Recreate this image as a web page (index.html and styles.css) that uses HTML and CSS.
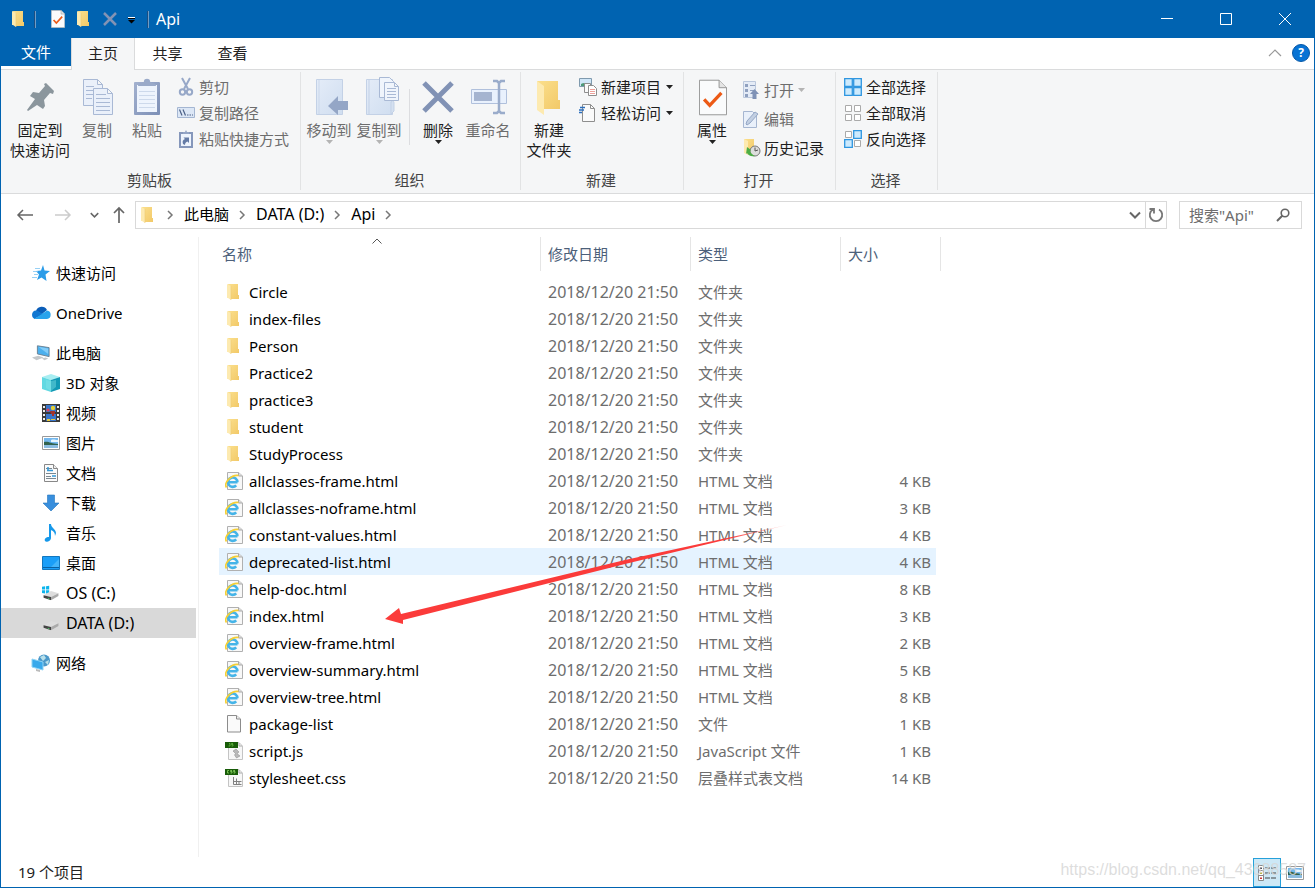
FILE: index.html
```html
<!DOCTYPE html>
<html lang="zh-CN">
<head>
<meta charset="utf-8">
<meta name="viewport" content="width=device-width, initial-scale=1">
<title>Api</title>
<link rel="stylesheet" href="styles.css">
</head>
<body>
<svg class="defs" aria-hidden="true">
  <defs>
    <linearGradient id="g-fold" x1="0" y1="0" x2="1" y2="1"><stop offset="0" stop-color="#fbdf8c"/><stop offset="1" stop-color="#f2c968"/></linearGradient>
    <linearGradient id="g-clip" x1="0" y1="0" x2="1" y2="1"><stop offset="0" stop-color="#a3b1cf"/><stop offset="1" stop-color="#7c8fb6"/></linearGradient>
    <linearGradient id="g-book" x1="0" y1="0" x2="1" y2="1"><stop offset="0" stop-color="#e4ecf8"/><stop offset="1" stop-color="#d0def0"/></linearGradient>
    <symbol id="folder" viewBox="0 0 18 18"><path d="M3 1h10v11h1v4H5z" fill="url(#g-fold)"/><path d="M2 1l4 2v14l-3-2H2z" fill="#fdeab0"/><path d="M6 3v14" stroke="#eccb74" stroke-width=".6"/></symbol>
    <symbol id="html" viewBox="0 0 18 18"><path d="M2.500.5h11L17.500 4v13.500h-15z" fill="#f8f8f8" stroke="#b0b0b0"/><path d="M13.500.5V4h4" fill="#ddd" stroke="#a8a8a8"/><path d="M12.500 10.300H4M12.400 10.300a4.700 4.700 0 1 0-1.200 3" fill="none" stroke="#45b4e8" stroke-width="2.600"/><path d="M1.500 15.500C-1.500 11 6 2.500 13.500 3.500" fill="none" stroke="#f5cf35" stroke-width="1.700"/></symbol>
    <symbol id="blank" viewBox="0 0 18 18"><path d="M2.500.5h9L15.500 4v13h-13z" fill="#fafafa" stroke="#8c8c8c"/><path d="M11.500.5V4h4" fill="#eee" stroke="#8c8c8c"/></symbol>
    <symbol id="js" viewBox="1 0 18 18"><path d="M4.500.5H15L18.500 4v13.500h-14z" fill="#f7f7f7" stroke="#c4c4c4"/><path d="M15 1v3h3" fill="none" stroke="#aaa"/><path d="M0 0h14v6H0z" fill="#185c08"/><path d="M5 1.500h1V4H4.500M9 1.500H7.500v1H9V4H7.500" fill="none" stroke="#65b843" stroke-width=".8"/><path d="M12 7l3 3-2 1.500 3 2.500-3.500 2-2-3 1-1.500L9 9z" fill="#b9b9b9" stroke="#888" stroke-width=".5"/></symbol>
    <symbol id="css" viewBox="1 0 18 18"><path d="M4.500.5H15L18.500 4v13.500h-14z" fill="#f7f7f7" stroke="#c4c4c4"/><path d="M15 1v3h3" fill="none" stroke="#aaa"/><path d="M0 0h14v6H0z" fill="#185c08"/><path d="M5 1.500H3.500V4H5M8 1.500H6.500v1H8V4H6.500M11 1.500H9.500v1H11V4H9.500" fill="none" stroke="#8bd462" stroke-width=".8"/><path d="M9.500 8v7.500h8M9.500 12.500h8M12.500 9.500v6M15 12v3" fill="none" stroke="#808080"/></symbol>
    <symbol id="check" viewBox="0 0 30 38"><path d="M.5.500h21l8 8v29h-29z" fill="#fafbfc" stroke="#919191"/><path d="M21.500.5v8h8" fill="#e4e4e4" stroke="#919191"/><path d="M5.500 21l6 6.500L24 14" fill="none" stroke="#ec5a16" stroke-width="3.500"/></symbol>
    <symbol id="caret" viewBox="0 0 7 4"><path d="M0 0h7L3.500 4z" fill="currentColor"/></symbol>
    <symbol id="next" viewBox="0 0 8 10"><path d="M2 1l4 4-4 4" fill="none" stroke="#777" stroke-width="1.500"/></symbol>
    <symbol id="down" viewBox="0 0 12 8"><path d="M1 1.500l5 5 5-5" fill="none" stroke="currentColor" stroke-width="2"/></symbol>
    <symbol id="photo" viewBox="0 0 18 14"><path d="M.5.500h17v13H.5z" fill="#fff" stroke="#999"/><path d="M2 2h14v10H2z" fill="#74b8ee"/><path d="M2 6c5-1 7 2 14 2v2H2z" fill="#31624d"/><path d="M2 9h14v3H2z" fill="#8cbce0"/><path d="M9 4c3-1 4 0 7 0v2H9z" fill="#e6f5ff"/></symbol>
    <symbol id="drive" viewBox="0 0 20 12"><path d="M1 6l9-5 9 2.500-9 4.500z" fill="#ddd"/><path d="M1 6l9 2v4L1 9z" fill="#444"/><path d="M10 8l9-4.500V7l-9 5z" fill="#aaa"/><path d="M6 9l2 .5v1L6 10z" fill="#4ce36c"/></symbol>
  </defs>
</svg>

<div class="window">
  <header class="titlebar">
    <div class="quick">
      <svg class="i18"><use href="#folder"/></svg>
      <span class="tsep"></span>
      <svg class="tcheck"><use href="#check"/></svg>
      <svg class="i18"><use href="#folder"/></svg>
      <svg class="tx" viewBox="0 0 14 14"><path d="M1 1l12 12M13 1L1 13" stroke="#8293b4" stroke-width="2.500"/></svg>
      <svg class="tdrop" viewBox="0 0 7 7"><path d="M0 .5h7" stroke="#fff"/><path d="M0 1.500h7" stroke="#000"/><path d="M0 3h7L3.500 6.500z"/></svg>
      <span class="tsep"></span>
      <h1>Api</h1>
    </div>
    <div class="winbtns">
      <button type="button" aria-label="最小化"><svg viewBox="0 0 12 12"><path d="M0 5.500h12"/></svg></button>
      <button type="button" aria-label="最大化"><svg viewBox="0 0 12 12"><path d="M.5.500h11v11H.5z"/></svg></button>
      <button type="button" aria-label="关闭"><svg viewBox="0 0 12 12"><path d="M0 0l12 12M12 0L0 12"/></svg></button>
    </div>
  </header>

  <nav class="tabs">
    <button type="button" class="tab file">文件</button>
    <button type="button" class="tab active">主页</button>
    <button type="button" class="tab">共享</button>
    <button type="button" class="tab">查看</button>
    <div class="help">
      <svg class="collapse" viewBox="0 0 14 8"><path d="M1 7l6-6 6 6" fill="none" stroke="#999" stroke-width="1.200"/></svg>
      <button type="button">?</button>
    </div>
  </nav>

  <section class="ribbon">
    <div class="group">
      <div class="tools clip">
        <button type="button" class="big pin">
          <svg width="40" height="44" viewBox="0 0 40 44"><path d="M7 34l8-11-5-3 3-4 6 1 6-7-1-2 2-1 8 8-1 3-3-1-6 7 1 6-2 3-6-4L8 35z" fill="#8b969d"/></svg>
          <span>固定到<br>快速访问</span></button>
        <button type="button" class="big off">
          <svg width="40" height="44" viewBox="0 0 40 44"><g fill="#eaf0fa" stroke="#a9b9d5"><path d="M6.500 3.500h14l5 5v21h-19zM20.500 3.500v5h5"/><path d="M9 10.500h8M9 14.500h8M9 18.500h8M9 22.500h6"/><path d="M16.500 12.500h14l5 5v21h-19zM30.500 12.500v5h5M19 18.500h10M19 22.500h14M19 26.500h14M19 30.500h14M19 34.500h14"/></g></svg>
          <span>复制</span></button>
        <button type="button" class="big off">
          <svg width="40" height="44" viewBox="0 0 40 44"><rect x="7" y="6" width="26" height="33" rx="1" fill="url(#g-clip)"/><path d="M10 9h20v27H10z" fill="#eef4fd"/><path d="M12 15.500h16M12 19.500h16M12 23.500h16M12 27.500h16M12 31.500h16" stroke="#cdd9eb"/><path d="M11 10c0-4 6-2 6-5 0-3 6-3 6 0s6 1 6 5z" fill="#9aaac9"/></svg>
          <span>粘贴</span></button>
        <div class="list">
          <button type="button" class="small off"><svg width="18" height="18" viewBox="0 0 18 18" fill="none" stroke="#97a8c8" stroke-width="2"><path d="M5 0l6 11M13 0L7 11"/><circle cx="5.500" cy="14" r="2.700"/><circle cx="12.500" cy="14" r="2.700"/></svg>剪切</button>
          <button type="button" class="small off"><svg width="18" height="18" viewBox="0 0 18 18"><path d="M.5 3.500h17v10H.5z" fill="#dce7f6" stroke="#a4b6d2"/><path d="M2.500 5.500l2.500 6M6 5.500l2.500 6M10 11h1.500M12.500 11H14M15 11h1" stroke="#4d6288" stroke-width="1.200"/></svg>复制路径</button>
          <button type="button" class="small off"><svg width="18" height="18" viewBox="0 0 18 18"><path d="M3 3h12v14H3z" fill="#eef4fd" stroke="#8597bb" stroke-width="2"/><path d="M6 4V2h2l1-2 1 2h2v2z" fill="#93a4c5"/><path d="M6 14c-1-3 0-4 2-5L6.500 7.500H12V13l-1.500-1.500C9 12 8 13 8 15z" fill="#647ba6"/></svg>粘贴快捷方式</button>
        </div>
      </div>
      <h2>剪贴板</h2>
    </div>

    <div class="group">
      <div class="tools org">
        <button type="button" class="big off">
          <svg width="40" height="44" viewBox="0 0 40 44"><path d="M7.500 3.500h26v35h-26z" fill="url(#g-book)" stroke="#c3d1e6"/><path d="M10 4v34" stroke="#cbd8eb"/><path d="M19 30l10-10v5h10v9H29v5z" fill="#94a6c6"/></svg>
          <span>移动到</span><svg class="caret"><use href="#caret"/></svg></button>
        <button type="button" class="big off">
          <svg width="40" height="44" viewBox="0 0 40 44"><path d="M7.500 3.500h26v35h-26z" fill="url(#g-book)" stroke="#c3d1e6"/><path d="M10 4v34M32 38V27c0-3 3-3 3 0v8l-3 3" fill="#d4e0f0" stroke="#c3d1e6"/><g fill="#f0f5fc" stroke="#a9b9d5"><path d="M20.500 1.500h10l4 4v16h-14z"/><path d="M25.500 6.500h10l4 4v14h-14zM35.500 6.500v4h4M28 12.500h9M28 15.500h9M28 18.500h9M28 21.500h9"/></g></svg>
          <span>复制到</span><svg class="caret"><use href="#caret"/></svg></button>
        <span class="minisep"></span>
        <button type="button" class="big">
          <svg width="40" height="44" viewBox="0 0 40 44"><path d="M6 7l28 28M34 7L6 35" stroke="#8192b5" stroke-width="5"/></svg>
          <span>删除</span><svg class="caret"><use href="#caret"/></svg></button>
        <button type="button" class="big off">
          <svg width="40" height="44" viewBox="0 0 40 44"><path d="M3.500 13.500h35v14h-35z" fill="#e9f1fd" stroke="#b0c0dc"/><path d="M6 16h18v9H6z" fill="#a5b4d0"/><path d="M25 5h4l2 2 2-2h4M31 7v29M25 37h4l2-2 2 2h4" fill="none" stroke="#9aaccb" stroke-width="2.500"/></svg>
          <span>重命名</span></button>
      </div>
      <h2>组织</h2>
    </div>

    <div class="group">
      <div class="tools">
        <button type="button" class="big">
          <svg width="40" height="44" viewBox="0 0 40 44"><path d="M8 5h21v19h2v9H14z" fill="url(#g-fold)"/><path d="M8 5l7 5v29l-7-5z" fill="#fdeab0"/></svg>
          <span>新建<br>文件夹</span></button>
        <div class="list">
          <button type="button" class="small"><svg width="18" height="18" viewBox="0 0 18 18"><path d="M.5.500h12v8H.5z" fill="#cfe6f8" stroke="#7f9aae"/><path d="M2 6c3-2 6 0 9-1v3H2z" fill="#4d9a78"/><path d="M5.500 5.500h6v9h-6z" fill="#fafafa" stroke="#8e8e8e"/><path d="M9.500 7.500h5l3 3v7h-8z" fill="#fff" stroke="#8e8e8e"/><path d="M11 11.500h5M11 13.500h5M11 15.500h5" stroke="#eda19b"/></svg>新建项目<svg class="caret"><use href="#caret"/></svg></button>
          <button type="button" class="small"><svg width="18" height="18" viewBox="0 0 18 18"><path d="M3.500.5h8l4 4v13h-12z" fill="#fafafa" stroke="#8e8e8e"/><path d="M11.500.5v4h4" fill="none" stroke="#8e8e8e"/><path d="M1 3.500h5M0 6h5M0 8.500h3" stroke="#2d6fbd" stroke-width="1.300"/></svg>轻松访问<svg class="caret"><use href="#caret"/></svg></button>
        </div>
      </div>
      <h2>新建</h2>
    </div>

    <div class="group">
      <div class="tools">
        <button type="button" class="big">
          <svg width="40" height="44" viewBox="0 0 40 44"><use href="#check" x="7" y="3" width="28" height="37"/></svg>
          <span>属性</span><svg class="caret"><use href="#caret"/></svg></button>
        <div class="list open">
          <button type="button" class="small off"><svg width="18" height="18" viewBox="0 0 18 18"><path d="M.5.500h12v16H.5z" fill="#e4ebf6" stroke="#bac7dc"/><path d="M2 3h3v3H2zM2 8h3v3H2zM2 13h3v3H2zM7 4h5v1H7zM7 9h4v1H7z" fill="#8fa0bf"/><path d="M7 13l4.500-5 4.500 5h-2.500v5h-4v-5z" fill="#7f92b6"/></svg>打开<svg class="caret"><use href="#caret"/></svg></button>
          <button type="button" class="small off"><svg width="18" height="18" viewBox="0 0 18 18"><path d="M.5 1.500h9l4 4v12H.5z" fill="#e9f0fa" stroke="#a6b6d1"/><path d="M3 14l1-3 8-9 3 2-8 9-3 2z" fill="#c2cfe2" stroke="#94a7c6"/></svg>编辑</button>
          <button type="button" class="small"><svg width="18" height="18" viewBox="0 0 18 18"><path d="M1 0h10v15H4z" fill="url(#g-fold)"/><path d="M1 0l4 2v14l-4-2z" fill="#fdeab0"/><circle cx="12" cy="12" r="5" fill="#ddd" stroke="#767676"/><path d="M12 8.500V12l3-1" fill="none" stroke="#555"/><path d="M4 8l4 3-1 1c1 3 3 4 5 5-4 1-7-1-8-3l-1 1z" fill="#4cad45"/></svg>历史记录</button>
        </div>
      </div>
      <h2>打开</h2>
    </div>

    <div class="group">
      <div class="tools">
        <div class="list">
          <button type="button" class="small"><svg width="18" height="18" viewBox="0 0 18 18" fill="#cdeafd" stroke="#2f96e0" stroke-width="1.300"><path d="M.7.700h7.600v7.600H.7zM9.700.7h7.600v7.600H9.700zM.7 9.700h7.600v7.600H.7zM9.700 9.700h7.600v7.600H9.700z"/></svg>全部选择</button>
          <button type="button" class="small"><svg width="18" height="18" viewBox="0 0 18 18" fill="#fff" stroke="#aaa"><path d="M1.500 1.500h6v6h-6zM10.500 1.500h6v6h-6zM1.500 10.500h6v6h-6zM10.500 10.500h6v6h-6z"/></svg>全部取消</button>
          <button type="button" class="small"><svg width="18" height="18" viewBox="0 0 18 18"><path d="M1.500 1.500h6v6h-6zM10.500 10.500h6v6h-6z" fill="#fff" stroke="#aaa"/><path d="M9.700.7h7.600v7.600H9.700zM.7 9.700h7.600v7.600H.7z" fill="#cdeafd" stroke="#2f96e0" stroke-width="1.300"/></svg>反向选择</button>
        </div>
      </div>
      <h2>选择</h2>
    </div>
  </section>

  <section class="address">
    <div class="navbtns">
      <button type="button" aria-label="后退"><svg width="16" height="12" viewBox="0 0 16 12"><path d="M1 6h15M6 1L1 6l5 5" fill="none" stroke="#666" stroke-width="1.500"/></svg></button>
      <button type="button" aria-label="前进"><svg width="16" height="12" viewBox="0 0 16 12"><path d="M0 6h15M10 1l5 5-5 5" fill="none" stroke="#ccc" stroke-width="1.500"/></svg></button>
      <button type="button" class="recent" aria-label="最近"><svg width="9" height="6"><use href="#down"/></svg></button>
      <button type="button" class="up" aria-label="上移"><svg width="12" height="16" viewBox="0 0 12 16"><path d="M6 16V1M1 6l5-5 5 5" fill="none" stroke="#666" stroke-width="1.700"/></svg></button>
    </div>
    <div class="path">
      <svg class="i18"><use href="#folder"/></svg>
      <svg class="next"><use href="#next"/></svg><span>此电脑</span>
      <svg class="next"><use href="#next"/></svg><span class="latin">DATA (D:)</span>
      <svg class="next"><use href="#next"/></svg><span class="latin">Api</span>
      <svg class="next"><use href="#next"/></svg>
      <button type="button" class="hist" aria-label="历史"><svg width="12" height="8"><use href="#down"/></svg></button>
      <button type="button" class="refresh" aria-label="刷新"><svg width="16" height="16" viewBox="0 0 16 16"><path d="M11 2.500A6.200 6.200 0 1 1 5 2.500M1.500 2H6v4.500" fill="none" stroke="#777" stroke-width="1.800"/></svg></button>
    </div>
    <label class="search">
      <input type="text" placeholder="搜索&quot;Api&quot;" aria-label="搜索">
      <svg width="14" height="14" viewBox="0 0 14 14"><circle cx="9" cy="5" r="3.800" fill="none" stroke="#666" stroke-width="1.600"/><path d="M6.500 7.500L1 13" stroke="#666" stroke-width="2"/></svg>
    </label>
  </section>

  <div class="main">
    <nav class="side">
      <a href="#" class="top"><svg viewBox="0 0 18 18"><path d="M11 1l1.500 5.500L18 7l-4.500 3.500 1 6.500-5-3.500L5 16l2-5.500L4 7l5-.5z" fill="#2b9ce8"/><path d="M3 4.500h5M1 7.500h5M2 10.500h4M0 13.500h5" stroke="#7cc4f2" stroke-width=".8"/></svg>快速访问</a>
      <a href="#" class="top"><svg class="cloud" viewBox="0 0 20 14"><path d="M5 5a6 6 0 0 1 11-1l-5 4z" fill="#0a5db8"/><path d="M4.500 13A4.300 4.300 0 0 1 5 4.500c2 0 3 1 4 2L13 8 3 13z" fill="#1177d1"/><path d="M16 4.500a4.300 4.300 0 0 1 0 8.500H3L11 8z" fill="#29a3ec"/></svg>OneDrive</a>
      <a href="#" class="top"><svg viewBox="0 0 20 18"><path d="M6 1l13 2v10L6 10z" fill="#4cb0ee" stroke="#6a7d8d"/><path d="M7 2l11 8V4z" fill="#82ccf8"/><path d="M0 14l7-2 6 2-8 3zM11 15l4-1 3 1-4 2z" fill="#c4c8cb"/></svg>此电脑</a>
      <a href="#"><svg viewBox="0 0 18 18"><path d="M0 3l9-3 9 3-9 3z" fill="#a8eef2"/><path d="M0 3l9 3v12l-9-3z" fill="#62d9e2"/><path d="M9 6l9-3v12l-9 3z" fill="#1299b5"/><path d="M4 6l5 1 5-1v7l-5 4-5-3z" fill="#8ae6ec" opacity=".4"/></svg>3D 对象</a>
      <a href="#"><svg viewBox="0 0 18 18"><path d="M0 0h18v18H0z" fill="#3a3a3a"/><path d="M4 1h10v7H4zM4 10h10v7H4z" fill="#3976cb"/><path d="M1 2h2v2H1zM1 6h2v2H1zM1 10h2v2H1zM1 14h2v2H1zM15 2h2v2h-2zM15 6h2v2h-2zM15 10h2v2h-2zM15 14h2v2h-2z" fill="#eee"/><circle cx="11" cy="4" r="2.200" fill="#e5cf35"/><circle cx="6" cy="6" r="1.600" fill="#db4058"/><path d="M8 7h5v3H9zM10 10h2v2h-2z" fill="#a3322c"/><path d="M5 15h3v2H5zM9 15h4v1H9z" fill="#e7ca3b"/></svg>视频</a>
      <a href="#"><svg viewBox="0 0 18 14"><use href="#photo"/></svg>图片</a>
      <a href="#"><svg viewBox="0 0 18 18"><path d="M2.500.5h9l4 4v13h-13z" fill="#fbfbfb" stroke="#888"/><path d="M11.500.5v4h4" fill="#eee" stroke="#888"/><path d="M4 4.500h6M4 9.500h10M4 12.500h5M4 14.500h10" stroke="#7b8790"/><path d="M5 6.500h6M6 3v4M10 12h4" stroke="#3599d6" stroke-width="1.500"/></svg>文档</a>
      <a href="#"><svg viewBox="0 0 18 18"><path d="M5.500 1h7v8h4.500L9 17 1 9h4.500z" fill="#398fdd" stroke="#2375bd" stroke-width=".6"/></svg>下载</a>
      <a href="#"><svg viewBox="0 0 18 18"><path d="M7 0h2c0 4 5 5 5 9l-1 3c0-4-2-5-4-6v8c0 3-5 5-6 3s1-4 4-4z" fill="#1698ea"/></svg>音乐</a>
      <a href="#"><svg viewBox="0 0 18 14"><path d="M.5.500h17v13H.5z" fill="#1a9ef8" stroke="#1277bf"/><path d="M1 11.500h16" stroke="#0861a4"/><path d="M9 11l8-8v8z" fill="#43b4fa"/></svg>桌面</a>
      <a href="#" class="latin"><svg viewBox="0 0 20 18"><path d="M0 2l3.500-.5v3.500H0zM4.500 1.400L8 1v4H4.500zM0 6h3.500v3.500L0 9zM4.500 6H8v4l-3.500-.4z" fill="#0cb5ed"/><use href="#drive" y="6" width="20" height="11"/></svg>OS (C:)</a>
      <a href="#" class="latin current"><svg viewBox="0 0 20 18"><use href="#drive" y="6" width="20" height="11"/></svg>DATA (D:)</a>
      <a href="#" class="top net"><svg viewBox="0 0 18 18"><circle cx="12" cy="6.500" r="6" fill="#4b98c9"/><path d="M8 3l4-2 2 3-3 3zM13 8l4-2-1 5z" fill="#b9e0ea"/><path d="M0 5l11 3v8L0 13z" fill="#39a9eb" stroke="#8dd3f6"/><path d="M4 15l4 1v2l-4-1z" fill="#bbb"/></svg>网络</a>
    </nav>

    <section class="files">
      <table>
        <colgroup><col class="c-name"><col class="c-date"><col class="c-type"><col class="c-size"><col class="c-edge"></colgroup>
        <thead><tr>
          <th scope="col">名称<svg class="sort" viewBox="0 0 10 6"><path d="M.5 5.500L5 1l4.500 4.500" fill="none" stroke="#555"/></svg></th>
          <th scope="col">修改日期</th><th scope="col">类型</th><th scope="col" class="nosep">大小</th><td class="edge"></td>
        </tr></thead>
        <tbody>
          <tr><td><svg><use href="#folder"/></svg>Circle</td><td>2018/12/20 21:50</td><td>文件夹</td><td></td></tr>
          <tr><td><svg><use href="#folder"/></svg>index-files</td><td>2018/12/20 21:50</td><td>文件夹</td><td></td></tr>
          <tr><td><svg><use href="#folder"/></svg>Person</td><td>2018/12/20 21:50</td><td>文件夹</td><td></td></tr>
          <tr><td><svg><use href="#folder"/></svg>Practice2</td><td>2018/12/20 21:50</td><td>文件夹</td><td></td></tr>
          <tr><td><svg><use href="#folder"/></svg>practice3</td><td>2018/12/20 21:50</td><td>文件夹</td><td></td></tr>
          <tr><td><svg><use href="#folder"/></svg>student</td><td>2018/12/20 21:50</td><td>文件夹</td><td></td></tr>
          <tr><td><svg><use href="#folder"/></svg>StudyProcess</td><td>2018/12/20 21:50</td><td>文件夹</td><td></td></tr>
          <tr><td><svg><use href="#html"/></svg>allclasses-frame.html</td><td>2018/12/20 21:50</td><td>HTML 文档</td><td>4 KB</td></tr>
          <tr><td><svg><use href="#html"/></svg>allclasses-noframe.html</td><td>2018/12/20 21:50</td><td>HTML 文档</td><td>3 KB</td></tr>
          <tr><td><svg><use href="#html"/></svg>constant-values.html</td><td>2018/12/20 21:50</td><td>HTML 文档</td><td>4 KB</td></tr>
          <tr class="hover"><td><svg><use href="#html"/></svg>deprecated-list.html</td><td>2018/12/20 21:50</td><td>HTML 文档</td><td>4 KB</td></tr>
          <tr><td><svg><use href="#html"/></svg>help-doc.html</td><td>2018/12/20 21:50</td><td>HTML 文档</td><td>8 KB</td></tr>
          <tr><td><svg><use href="#html"/></svg>index.html</td><td>2018/12/20 21:50</td><td>HTML 文档</td><td>3 KB</td></tr>
          <tr><td><svg><use href="#html"/></svg>overview-frame.html</td><td>2018/12/20 21:50</td><td>HTML 文档</td><td>2 KB</td></tr>
          <tr><td><svg><use href="#html"/></svg>overview-summary.html</td><td>2018/12/20 21:50</td><td>HTML 文档</td><td>5 KB</td></tr>
          <tr><td><svg><use href="#html"/></svg>overview-tree.html</td><td>2018/12/20 21:50</td><td>HTML 文档</td><td>8 KB</td></tr>
          <tr><td><svg><use href="#blank"/></svg>package-list</td><td>2018/12/20 21:50</td><td>文件</td><td>1 KB</td></tr>
          <tr><td><svg><use href="#js"/></svg>script.js</td><td>2018/12/20 21:50</td><td>JavaScript 文件</td><td>1 KB</td></tr>
          <tr><td><svg><use href="#css"/></svg>stylesheet.css</td><td>2018/12/20 21:50</td><td>层叠样式表文档</td><td>14 KB</td></tr>
        </tbody>
      </table>
      <svg class="arrow" viewBox="0 0 404 101" aria-hidden="true">
        <defs><linearGradient id="g-arrow" gradientUnits="userSpaceOnUse" x1="340" y1="0" x2="402" y2="0"><stop offset="0" stop-color="#fb3b3a"/><stop offset="1" stop-color="#fb3b3a" stop-opacity=".3"/></linearGradient></defs>
        <path d="M0 95L14 84l2 6L240 36 402 1 240 40 18 96l0 4z" fill="url(#g-arrow)"/>
      </svg>
    </section>
  </div>

  <footer class="status">
    <span>19 个项目</span>
    <div class="views">
      <button type="button" class="on" aria-label="详细信息"><svg width="18" height="18" viewBox="0 0 18 18"><path d="M.5 1.500h5v5h-5zM.5 6.500h5v5h-5zM.5 11.500h5v5h-5z" fill="#fff" stroke="#888"/><path d="M2 3.500h2v1.500H2z" fill="#456"/><path d="M2 8.500h2V10H2z" fill="#b2b24a"/><path d="M2 13.500h2V15H2z" fill="#c33"/><path d="M7 4h5M13 4h5M7 9h5M13 9h5M7 14h5M13 14h5" stroke="#444"/></svg></button>
      <button type="button" aria-label="大图标"><svg width="18" height="14"><use href="#photo"/></svg></button>
    </div>
    <span class="mark">https://blog.csdn.net/qq_43688587</span>
  </footer>
</div>
</body>
</html>
```
FILE: styles.css
```css
* { box-sizing: border-box; }
body {
  margin: 0;
  font: 15px/20px "Noto Sans", "Noto Sans CJK SC", sans-serif;
  color: #000;
  background: #fff;
}
button { margin: 0; padding: 0; border: 0; background: none; font: inherit; color: inherit; }
svg { display: block; flex: none; overflow: visible; }
a { color: inherit; text-decoration: none; }
h1, h2 { margin: 0; font: inherit; }
.defs { position: absolute; width: 0; height: 0; }
.i18 { width: 18px; height: 18px; }
.latin { font-size: 16px; }

.window {
  display: flex;
  flex-direction: column;
  min-height: 100vh;
  border: 1px solid #0063b1;
  border-top: 0;
}

/* title bar */
.titlebar { display: flex; justify-content: space-between; height: 38px; background: #0063b1; color: #fff; }
.quick { display: flex; align-items: center; padding-left: 9px; }
.tsep { width: 2px; height: 17px; background: #6f9cc6; border-left: 1px solid #1a4e82; margin-left: 6px; }
.tcheck { width: 14px; height: 18px; margin: 0 10px 0 15px; }
.tx { width: 14px; height: 14px; margin-left: 10px; }
.tdrop { width: 7px; height: 7px; margin: 3px 6px 0 11px; }
.quick h1 { margin-left: 7px; font-size: 16px; }
.winbtns { display: flex; }
.winbtns button { width: 59px; display: grid; place-items: center; }
.winbtns svg { width: 12px; height: 12px; fill: none; stroke: #fff; }

/* tabs */
.tabs { display: flex; height: 32px; border-bottom: 1px solid #dadbdc; }
.tab { width: 65px; height: 31px; padding-bottom: 2px; color: #222; }
.tab.file { width: 70px; height: 28px; padding: 0; background: #0063b1; color: #fff; }
.tab.active { width: 64px; height: 32px; background: #f5f6f7; border: 1px solid #dadbdc; border-bottom: 0; border-top: 0; }
.help { margin-left: auto; display: flex; align-items: center; gap: 10px; padding: 0 4px 1px 0; }
.collapse { width: 14px; height: 8px; }
.help button { width: 18px; height: 18px; border-radius: 50%; background: #0873d4; border: 1px solid #0558a8; color: #fff; font-weight: 700; font-size: 12px; line-height: 16px; }

/* ribbon */
.ribbon { display: flex; height: 124px; padding: 2px 0 3px; background: #f5f6f7; border-bottom: 1px solid #dadbdc; }
.group { display: flex; flex-direction: column; justify-content: space-between; border-right: 1px solid #e2e3e4; }
.group:nth-child(1) { width: 300px; }
.group:nth-child(2) { width: 220px; }
.group:nth-child(3) { width: 163px; }
.group:nth-child(4) { width: 152px; }
.group:nth-child(5) { width: 102px; }
.group h2 { padding-right: 2px; text-align: center; color: #444; line-height: 20px; }
.tools { display: flex; padding-left: 3px; }
.tools.clip { padding-left: 7px; }
.big { display: flex; flex-direction: column; align-items: center; align-self: flex-start; width: 50px; padding-top: 4px; color: #1e1e1e; white-space: nowrap; }
.big.pin { width: 64px; }
.off { color: #6d6d6d; }
.caret { width: 7px; height: 4px; color: #222; }
.off .caret { color: #b4b4b4; }
.minisep { width: 1px; height: 56px; margin: 17px 3px 0 5px; background: #dcdde0; }
.list { display: flex; flex-direction: column; padding: 2px 0 0 5px; }
.list.open { padding: 3px 0 0 6px; }
.small { display: flex; align-items: center; gap: 4px; height: 26px; color: #1e1e1e; white-space: nowrap; }
.small.off { color: #6d6d6d; }
.list.open .small { gap: 3px; height: 29px; }
.small .caret { margin-left: 1px; }

/* address row */
.address { display: flex; gap: 12px; padding: 7px 12px 8px 0; }
.navbtns { display: flex; width: 134px; margin-right: -12px; padding-left: 5px; }
.navbtns button { width: 38px; display: grid; place-items: center; }
.navbtns .recent { width: 24px; color: #666; }
.navbtns .up { width: 26px; }
.path { flex: 1; display: flex; align-items: center; height: 28px; border: 1px solid #d9d9d9; padding-left: 3px; white-space: nowrap; }
.path span { padding-bottom: 2px; }
.next { width: 8px; height: 10px; margin: 0 10px 0 9px; }
.hist { margin-left: auto; width: 20px; color: #666; display: grid; place-items: center; }
.refresh { width: 21px; height: 26px; border-left: 1px solid #d9d9d9; display: grid; place-items: center; }
.search { display: flex; align-items: center; width: 123px; height: 28px; padding: 0 11px 0 9px; border: 1px solid #d9d9d9; }
.search input { flex: 1; min-width: 0; padding: 0; border: 0; outline: 0; background: none; font: inherit; }
.search input::placeholder { color: #6d6d6d; opacity: 1; }

/* navigation pane */
.main { flex: 1; display: flex; }
.side { width: 198px; padding: 21px 2px 0 0; border-right: 1px solid #f0f0f0; }
.side a { display: flex; align-items: center; gap: 6px; height: 30px; padding-left: 41px; }
.side svg { width: 18px; height: 18px; }
.side a.top { padding-left: 31px; margin-bottom: 10px; }
.side a.top:nth-child(3) { margin-bottom: 0; }
.side a.net { margin-top: 10px; }
.side a.top .cloud { width: 20px; margin: 0 -1px; }
.side a.current { background: #d9d9d9; }

/* file list */
.files { flex: 1; position: relative; padding-left: 20px; }
table { border-collapse: separate; border-spacing: 0; table-layout: fixed; width: 722px; }
.c-name { width: 322px; }
.c-date, .c-type { width: 150px; }
.c-size { width: 95px; }
.c-edge { width: 5px; }
th { position: relative; height: 34px; padding: 0 0 0 7px; text-align: left; font-weight: 400; color: #4c607a; border-right: 1px solid #e5e5e5; }
th:first-child { padding-left: 3px; }
th.nosep { border: 0; }
.edge { border-right: 1px solid #e5e5e5; }
.sort { position: absolute; left: 153px; top: 1px; width: 10px; height: 6px; }
tbody::before { content: ""; display: block; height: 7px; }
tbody td { height: 27px; padding: 0 0 0 7px; color: #6d6d6d; white-space: nowrap; }
tbody td:first-child { display: flex; align-items: center; gap: 6px; padding-left: 6px; color: #000; }
tbody td:nth-child(2) { font-size: 16px; }
tbody td svg { width: 18px; height: 18px; }
tbody td:nth-child(4) { text-align: right; padding-right: 5px; }
.hover td { background: #e5f3ff; }
.arrow { position: absolute; left: 186px; top: 287px; width: 404px; height: 101px; }

/* status bar */
.status { position: relative; display: flex; justify-content: space-between; align-items: center; height: 30px; padding: 0 5px 0 17px; color: #222; }
.views { display: flex; align-self: flex-end; height: 29px; }
.views button { width: 28px; display: grid; place-items: center; }
.views .on { background: #cce8f6; border: 1px solid #26a0da; }
.mark { position: absolute; right: 8px; top: 3px; font: 16px/20px "Liberation Sans", Arial, sans-serif; color: rgba(215, 215, 215, .85); }
```
